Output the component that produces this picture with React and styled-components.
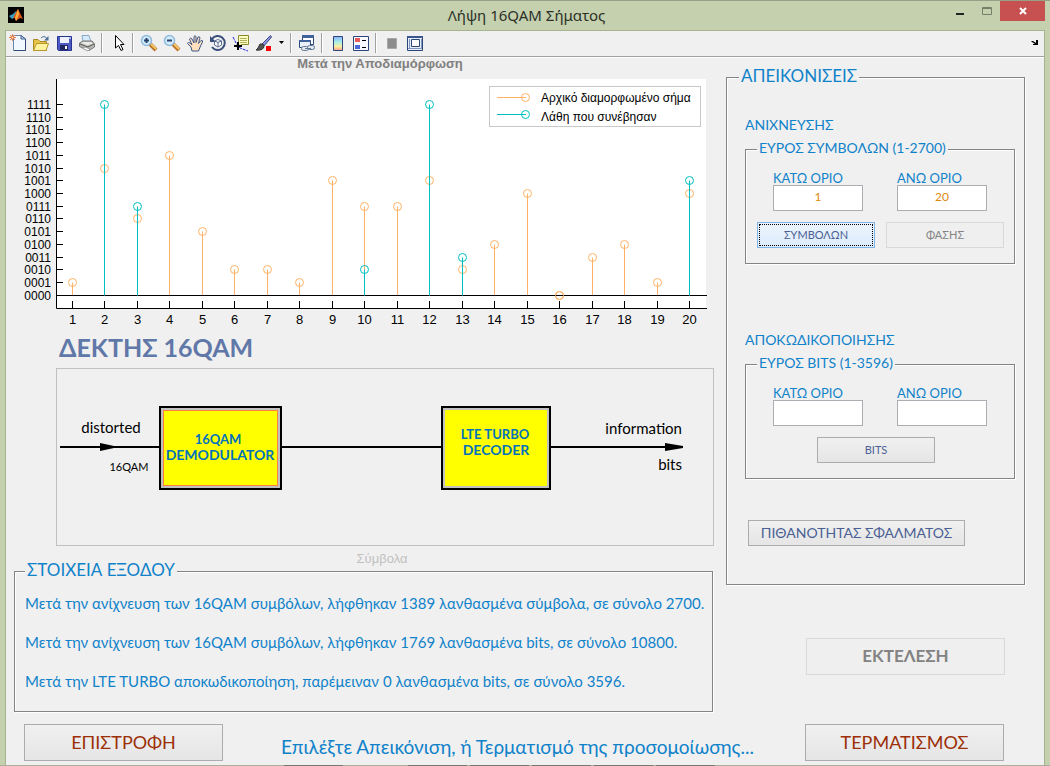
import React from "react";
import styled, { createGlobalStyle } from "styled-components";

const blue = "#0f82ca";
const orange = "#ffb266";
const teal = "#00bfbf";
const uiFont = `Lato, "Noto Sans", sans-serif`;
const plotFont = `"Liberation Sans", sans-serif`;

const originalSymbols = [
  1, 10, 6, 11, 5, 2, 2, 1, 9, 7, 7, 9, 2, 4, 8, 0, 3, 4, 1, 8
];
const symbolErrors = { 2: 15, 3: 7, 10: 2, 12: 15, 13: 3, 20: 9 };
const levels = Array.from({ length: 16 }, (_, i) => i);

const results = [
  "Μετά την ανίχνευση των 16QAM συμβόλων, λήφθηκαν 1389 λανθασμένα σύμβολα, σε σύνολο 2700.",
  "Μετά την ανίχνευση των 16QAM συμβόλων, λήφθηκαν 1769 λανθασμένα bits, σε σύνολο 10800.",
  "Μετά την LTE TURBO αποκωδικοποίηση, παρέμειναν 0 λανθασμένα bits, σε σύνολο 3596."
];

function symbolX(n) {
  return Math.floor(39.5 + n * 32.5) + 0.5;
}

function levelY(v) {
  return Math.round(294.8 - v * 12.72) + 0.5;
}

function Stem({ n, value, color }) {
  const x = symbolX(n);
  return (
    <g stroke={color} fill="none">
      <line x1={x} x2={x} y1={levelY(0)} y2={levelY(value)} />
      <circle cx={x} cy={levelY(value)} r="4" />
    </g>
  );
}

function StemPlot() {
  return (
    <Plot viewBox="14 75 700 254" role="img" aria-label="Μετά την Αποδιαμόρφωση">
      <rect x="56" y="79" width="650" height="229" fill="#fff" />
      {originalSymbols.map((value, i) => (
        <Stem key={i} n={i + 1} value={value} color={orange} />
      ))}
      <path d="M56.5 79V308.5H707M56 295.5H707" stroke="#000" fill="none" />
      <Stem n={16} value={0} color={orange} />
      {Object.keys(symbolErrors).map(n => (
        <Stem key={n} n={Number(n)} value={symbolErrors[n]} color={teal} />
      ))}
      {levels.map(v => (
        <g key={v}>
          <line x1="57" x2="63" y1={levelY(v)} y2={levelY(v)} stroke="#000" />
          <text x="51" y={levelY(v) + 4.5} fontSize="12" textAnchor="end">
            {v.toString(2).padStart(4, "0")}
          </text>
        </g>
      ))}
      {originalSymbols.map((_, i) => (
        <g key={i}>
          <line
            x1={symbolX(i + 1)}
            x2={symbolX(i + 1)}
            y1="301"
            y2="308"
            stroke="#000"
          />
          <text x={symbolX(i + 1)} y="324" fontSize="13" textAnchor="middle">
            {i + 1}
          </text>
        </g>
      ))}
      <rect x="489.5" y="86.5" width="211" height="40" fill="#fff" stroke="#c8c8c8" />
      <g stroke={orange} fill="none">
        <path d="M497 97.5H526" />
        <circle cx="525.5" cy="97.5" r="4" />
      </g>
      <g stroke={teal} fill="none">
        <path d="M497 114.5H526" />
        <circle cx="525.5" cy="114.5" r="4" />
      </g>
      <text x="541" y="102" fontSize="12">
        Αρχικό διαμορφωμένο σήμα
      </text>
      <text x="541" y="121" fontSize="12">
        Λάθη που συνέβησαν
      </text>
    </Plot>
  );
}

function ReceiverDiagram() {
  return (
    <Diagram viewBox="57 369 656 176" role="img" aria-label="Δέκτης 16QAM">
      <path d="M60 447H160M281 447H442M550 447H682" stroke="#000" strokeWidth="2" />
      <path d="M100 443L114 446V448L100 451ZM665 443L683 446V448L665 451Z" />
      <rect x="160" y="407" width="121" height="82" fill="#c0c0c0" stroke="#000" strokeWidth="2" />
      <rect x="163.5" y="410.5" width="114" height="75" fill="#ff0" stroke="#ff8040" />
      <rect x="442" y="407" width="108" height="82" fill="#c0c0c0" stroke="#000" strokeWidth="2" />
      <rect x="445" y="410" width="102" height="76" fill="#ff0" />
      <text x="111" y="433" fontSize="15" textAnchor="middle">distorted</text>
      <text x="129" y="471" fontSize="11" textAnchor="middle">16QAM</text>
      <text x="682" y="434" fontSize="15" textAnchor="end">information</text>
      <text x="682" y="470" fontSize="15" textAnchor="end">bits</text>
      <g fill="#0072bd" fontWeight="700" textAnchor="middle">
        <text x="218" y="444" fontSize="13">16QAM</text>
        <text x="220" y="460" fontSize="14">DEMODULATOR</text>
        <text x="495" y="439" fontSize="13">LTE TURBO</text>
        <text x="496" y="455" fontSize="14">DECODER</text>
      </g>
    </Diagram>
  );
}

function RangeFields({ id, low, high }) {
  return (
    <Fields>
      <Field htmlFor={`${id}-low`}>
        ΚΑΤΩ ΟΡΙΟ
        <Input id={`${id}-low`} type="text" defaultValue={low} />
      </Field>
      <Field htmlFor={`${id}-high`}>
        ΑΝΩ ΟΡΙΟ
        <Input id={`${id}-high`} type="text" defaultValue={high} />
      </Field>
    </Fields>
  );
}

const icons = {
  new: (
    <>
      <path d="M4.500 1.500H12L16.500 5V16.500H4.500Z" fill="#f2f8ff" stroke="#6a86b0" />
      <path d="M5 16.500H16.500V5" fill="none" stroke="#2f4a78" />
      <path d="M12 1.500V5H16.500Z" fill="#bfd3ee" stroke="#41608f" />
      <path d="M3.500 0V7M0 3.500H7M1 1L6 6M6 1L1 6" stroke="#e88a50" />
      <circle cx="3.500" cy="3.500" r="1.500" fill="#fff0a0" stroke="#d8553a" />
    </>
  ),
  open: (
    <>
      <path d="M1.500 16.500V5.500H6L8 7.500H14.500V16.500Z" fill="#e8c34c" stroke="#a88820" />
      <path d="M1.500 16.500L4.500 9.500H16.500L14 16.500Z" fill="#fff3a0" stroke="#b8962a" />
      <path d="M9 4Q12 1 15 4.500" fill="none" stroke="#4d6d94" />
      <path d="M16.500 2V6.500H12Z" fill="#4d6d94" />
    </>
  ),
  save: (
    <>
      <path d="M2.500 2.500H16.500V16.500H3.500L2.500 15.500Z" fill="#4c5bc8" stroke="#28348c" />
      <path d="M5 3H14V9H5Z" fill="#eef2ff" />
      <path d="M5 11H13V16H5Z" fill="#20265e" />
      <path d="M10 12H12V15H10Z" fill="#fff" />
      <path d="M14 3H16V5H14Z" fill="#a9b2f4" />
    </>
  ),
  print: (
    <>
      <path d="M5 8L4 1.500H11L13 8Z" fill="#d5eafa" stroke="#8aa9c8" />
      <path d="M1.500 9L5 7H14L16.500 10V13L11 16.500L1.500 12.500Z" fill="#b8b8b4" stroke="#777" />
      <path d="M3 9L9 11.500L15 9.500L13 8H5Z" fill="#e8e8e4" />
      <path d="M2 10L10 13L16 10" fill="none" stroke="#555" />
      <path d="M4 14L7 13L12 15L10 17Z" fill="#fff" stroke="#999" />
    </>
  ),
  pointer: (
    <path d="M6.500 1.500V14L9.500 11.500L12 16.500L14 15.500L11.500 10.500H15Z" fill="#fff" stroke="#000" />
  ),
  hand: (
    <path
      d="M6 17L5 13L1.500 9.500Q2 7.500 4 9L6 11L3.500 5Q4.500 3 6 5L8 9V2.500Q9 1 10 2.500V8.500L12 3Q13.500 2 14 4L12.500 9.500L15 6.500Q17 6 16.500 8L14.500 12L12.500 17Z"
      fill="#ffdfbd"
      stroke="#3d5785"
    />
  ),
  rotate: (
    <>
      <path d="M3 5A7 7 0 1 1 3 13" fill="none" stroke="#3a4f7c" strokeWidth="2" />
      <path d="M1 2V8H7Z" fill="#3a4f7c" />
      <path d="M9 5.500L12.500 7V11L9 13L5.500 11V7ZM5.500 7L9 8.500L12.500 7M9 8.500V13" fill="#fff" stroke="#5b6f94" />
    </>
  ),
  datatip: (
    <>
      <path d="M1 3L4 9L8 14L16 17" fill="none" stroke="#22d" strokeDasharray="3 1" />
      <path d="M6.500 1.500H16.500V10.500H10L7 12V10.500H6.500Z" fill="#ffffbe" stroke="#8a8a30" />
      <path d="M8 4.500H15M8 6.500H15M8 8.500H15" stroke="#b0b060" />
      <path d="M6 8V16M2 12H10" stroke="#000" strokeWidth="2" />
    </>
  ),
  brush: (
    <>
      <path d="M15.500 1.500L7 10L9 12L16.500 3Z" fill="#8e96df" stroke="#3c4486" />
      <path d="M8 10L5 10L3 14L1 16Q7 17 9 13Z" fill="#555" stroke="#333" />
      <path d="M11 12H16V17H11Z" fill="#f00" />
    </>
  ),
  link: (
    <>
      <path d="M4.500 1.500H15.500V10.500H4.500Z" fill="#fff" stroke="#2e4a7c" />
      <path d="M4 1H16V4H4Z" fill="#3f619c" />
      <path d="M1.500 6.500H12.500V13.500H1.500Z" fill="#e8f0fc" stroke="#2e4a7c" />
      <path d="M1 6H13V8H1Z" fill="#3f619c" />
      <rect x="3.500" y="12.500" width="7" height="4" rx="2" fill="#e4e8ee" stroke="#5f7894" />
      <rect x="9.500" y="11.500" width="7" height="4" rx="2" fill="#e4e8ee" stroke="#5f7894" />
      <path d="M7 14.500H13" stroke="#5f7894" />
    </>
  ),
  colorbar: (
    <>
      <defs>
        <linearGradient id="spectrum" x2="0" y2="1">
          <stop offset="0" stopColor="#8ab0ff" />
          <stop offset="0.4" stopColor="#a8f0e8" />
          <stop offset="0.7" stopColor="#fbf0a0" />
          <stop offset="1" stopColor="#ffa08c" />
        </linearGradient>
      </defs>
      <path d="M4.500 2.500H13.500V16.500H4.500Z" fill="url(#spectrum)" stroke="#2b477a" />
    </>
  ),
  legend: (
    <>
      <path d="M1.500 2.500H16.500V16.500H1.500Z" fill="#f7f9ff" stroke="#2b477a" />
      <path d="M3 4H8V8H3Z" fill="#e65c5c" />
      <path d="M3 11H8V15H3Z" fill="#4c68d8" />
      <path d="M10 6.500H14M10 13.500H14" stroke="#000" />
    </>
  ),
  hideTools: <path d="M4.500 4.500H13.500V14.500H4.500Z" fill="#8c8c8c" stroke="#a8a8a8" />,
  showTools: (
    <>
      <path d="M1.500 2.500H16.500V16.500H1.500Z" fill="#e8effc" stroke="#2b477a" />
      <path d="M1 2H17V4H1Z" fill="#3a568c" />
      <path d="M5.500 5.500H13.500V12.500H5.500Z" fill="#fff" stroke="#2b477a" />
      <path d="M2 14.500H16M3.500 5V14M15.500 5V14" stroke="#8195bb" />
    </>
  )
};

function Magnifier({ plus }) {
  return (
    <>
      <path d="M10 10L16 16" stroke="#b87224" strokeWidth="4" />
      <path d="M11 10L16 15" stroke="#f6c96c" strokeWidth="2" />
      <circle cx="6.500" cy="6.500" r="5" fill="#d2edfb" stroke="#92badc" strokeWidth="1.500" />
      <path d={plus ? "M4 6.500H9M6.500 4V9" : "M4 6.500H9"} stroke="#2a4270" strokeWidth="2" />
    </>
  );
}

function Tool({ label, icon, children }) {
  return (
    <ToolButton type="button" aria-label={label}>
      <svg width="18" height="18" viewBox="0 0 18 18">
        {icon ? icons[icon] : children}
      </svg>
    </ToolButton>
  );
}

export default function App() {
  return (
    <Window>
      <GlobalStyle />
      <TitleBar>
        <Logo width="16" height="16" viewBox="0 0 16 16" aria-hidden="true">
          <path d="M0 0H16V16H0Z" />
          <path d="M1 9L5 7L8 4L9 6L6 11L4 12Z" fill="#3b9ec4" />
          <path d="M5 11L8 5L10 2L12 6L15 12L12 11L8 14L7 11Z" fill="#d9561c" />
          <path d="M10 2L11 7L9 12L8 14L7 11Z" fill="#ffb03c" />
        </Logo>
        <WindowTitle>Λήψη 16QAM Σήματος</WindowTitle>
        <WindowButtons>
          <WindowButton type="button" aria-label="Ελαχιστοποίηση">
            <svg width="12" height="12"><path d="M2 8H10V10H2Z" fill="#222" /></svg>
          </WindowButton>
          <WindowButton type="button" aria-label="Μεγιστοποίηση">
            <svg width="12" height="12"><path d="M1.500 2.500H10.500V9.500H1.500ZM1 3.500H11" fill="none" stroke="#75806b" /></svg>
          </WindowButton>
          <WindowButton type="button" aria-label="Κλείσιμο" $close>
            <svg width="12" height="12"><path d="M3 3L9 9M9 3L3 9" stroke="#fff" strokeWidth="2" /></svg>
          </WindowButton>
        </WindowButtons>
      </TitleBar>

      <Client>
        <Toolbar>
          <Tool label="Νέο" icon="new" />
          <Tool label="Άνοιγμα" icon="open" />
          <Tool label="Αποθήκευση" icon="save" />
          <Tool label="Εκτύπωση" icon="print" />
          <Separator />
          <Tool label="Επιλογή" icon="pointer" />
          <Separator />
          <Tool label="Μεγέθυνση">
            <Magnifier plus />
          </Tool>
          <Tool label="Σμίκρυνση">
            <Magnifier />
          </Tool>
          <Tool label="Μετακίνηση" icon="hand" />
          <Tool label="Περιστροφή" icon="rotate" />
          <Tool label="Δείκτης δεδομένων" icon="datatip" />
          <Tool label="Πινέλο" icon="brush" />
          <CaretButton type="button" aria-label="Χρώμα πινέλου">
            <svg width="5" height="3"><path d="M0 0H5L2.500 3Z" /></svg>
          </CaretButton>
          <Separator />
          <Tool label="Σύνδεση" icon="link" />
          <Separator />
          <Tool label="Χρωματική κλίμακα" icon="colorbar" />
          <Tool label="Υπόμνημα" icon="legend" />
          <Separator />
          <Tool label="Απόκρυψη εργαλείων" icon="hideTools" />
          <Tool label="Εμφάνιση εργαλείων" icon="showTools" />
          <DockButton type="button" aria-label="Αγκύρωση">
            <svg width="8" height="6"><path d="M0 1H2L5 3V0H7V5H2V4H4L1 2Z" /></svg>
          </DockButton>
        </Toolbar>

        <Columns>
          <Main>
            <PlotTitle>Μετά την Αποδιαμόρφωση</PlotTitle>
            <StemPlot />
            <Heading>ΔΕΚΤΗΣ 16QAM</Heading>
            <DiagramPanel>
              <ReceiverDiagram />
            </DiagramPanel>
            <AxisLabel>Σύμβολα</AxisLabel>
            <Results>
              <Legend $large>ΣΤΟΙΧΕΙΑ ΕΞΟΔΟΥ</Legend>
              {results.map(line => (
                <ResultLine key={line}>{line}</ResultLine>
              ))}
            </Results>
          </Main>

          <Side>
            <ViewsPanel>
              <Legend $large>ΑΠΕΙΚΟΝΙΣΕΙΣ</Legend>
              <GroupTitle>ΑΝΙΧΝΕΥΣΗΣ</GroupTitle>
              <Group>
                <Legend>ΕΥΡΟΣ ΣΥΜΒΟΛΩΝ (1-2700)</Legend>
                <RangeFields id="symbols" low="1" high="20" />
                <ButtonRow>
                  <Button type="button" $active>ΣΥΜΒΟΛΩΝ</Button>
                  <Button type="button" disabled>ΦΑΣΗΣ</Button>
                </ButtonRow>
              </Group>
              <GroupTitle $spaced>ΑΠΟΚΩΔΙΚΟΠΟΙΗΣΗΣ</GroupTitle>
              <Group>
                <Legend>ΕΥΡΟΣ BITS (1-3596)</Legend>
                <RangeFields id="bits" low="" high="" />
                <ButtonRow $indent>
                  <Button type="button">BITS</Button>
                </ButtonRow>
              </Group>
              <WideButton type="button">ΠΙΘΑΝΟΤΗΤΑΣ ΣΦΑΛΜΑΤΟΣ</WideButton>
            </ViewsPanel>
            <RunButton type="button" disabled>ΕΚΤΕΛΕΣΗ</RunButton>
          </Side>
        </Columns>

        <Footer>
          <ActionButton type="button">ΕΠΙΣΤΡΟΦΗ</ActionButton>
          <Status>Επιλέξτε Απεικόνιση, ή Τερματισμό της προσομοίωσης...</Status>
          <ActionButton type="button">ΤΕΡΜΑΤΙΣΜΟΣ</ActionButton>
        </Footer>
      </Client>
      <WindowEdge>
        <EdgeTab $current />
        <EdgeTab />
        <EdgeTab />
        <EdgeTab />
        <EdgeTab />
        <EdgeTab />
      </WindowEdge>
    </Window>
  );
}

const GlobalStyle = createGlobalStyle`
  * {
    box-sizing: border-box;
  }
  body {
    margin: 0;
    background: #c4d0ae;
    font-family: ${uiFont};
  }
  h1, h2, p {
    margin: 0;
  }
  button, input {
    font-family: inherit;
  }
`;

const Window = styled.div`
  display: flex;
  flex-direction: column;
  min-height: 100vh;
  border-top: 1px solid #979f86;
  background: #c4d0ae;
`;

const TitleBar = styled.header`
  display: grid;
  grid-template-columns: 1fr auto 1fr;
  height: 29px;
  padding: 0 5px 0 8px;
`;

const Logo = styled.svg`
  margin-top: 6px;
`;

const WindowTitle = styled.h1`
  font: 400 15px/28px "Noto Sans", sans-serif;
  color: #2d3128;
`;

const WindowButtons = styled.div`
  display: flex;
  justify-content: flex-end;
  align-items: flex-start;
`;

const WindowButton = styled.button`
  display: grid;
  place-items: center;
  width: ${props => (props.$close ? "45px" : "27px")};
  height: 20px;
  padding: 0;
  border: none;
  background: ${props => (props.$close ? "#c75050" : "transparent")};
`;

const Client = styled.div`
  flex: 1;
  margin: 0 5px;
  border: 1px solid #a6b38c;
  border-bottom: none;
  background: #f0f0f0;
`;

const Toolbar = styled.div`
  display: flex;
  align-items: center;
  height: 27px;
  padding-bottom: 3px;
  border-bottom: 1px solid #fff;
  box-shadow: inset 0 -1px 0 #a0a0a0;
`;

const ToolButton = styled.button`
  display: grid;
  place-items: center;
  width: 23px;
  height: 22px;
  padding: 0;
  border: none;
  background: none;
`;

const CaretButton = styled(ToolButton)`
  width: 12px;
`;

const DockButton = styled(ToolButton)`
  margin-left: auto;
  width: 18px;
`;

const Separator = styled.div`
  width: 2px;
  height: 20px;
  margin: 0 3px;
  border-left: 1px solid #a0a0a0;
  border-right: 1px solid #fff;
`;

const Columns = styled.div`
  display: grid;
  grid-template-columns: minmax(0, 7fr) minmax(0, 3fr);
  gap: 12px;
  padding: 0 18px 0 8px;
`;

const Main = styled.main`
  display: flex;
  flex-direction: column;
`;

const PlotTitle = styled.h2`
  height: 17px;
  padding-left: 32px;
  font: 700 13px/12px ${plotFont};
  color: #808080;
  text-align: center;
`;

const Plot = styled.svg`
  display: block;
  width: 100%;
  font-family: ${plotFont};
`;

const Heading = styled.h2`
  margin: 2px 0 4px 45px;
  font-size: 25px;
  line-height: 33px;
  color: #5f78a8;
`;

const DiagramPanel = styled.div`
  margin-left: 42px;
  border: 1px solid #c0c0c0;
`;

const Diagram = styled.svg`
  display: block;
  width: 100%;
  font-family: ${uiFont};
`;

const AxisLabel = styled.p`
  height: 15px;
  padding: 5px 0 0 36px;
  font: 13px/16px ${plotFont};
  color: #c0c0c0;
  text-align: center;
`;

/* grey line with a white highlight below and to the right of it */
const Panel = styled.fieldset`
  min-width: 0;
  margin: 0 1px 1px 0;
  border: 1px solid #848484;
  box-shadow: 1px 1px 0 #fff, inset 1px 1px 0 #fff;
`;

const Legend = styled.legend`
  padding: 0 2px 2px;
  background: #f0f0f0;
  font-size: ${props => (props.$large ? "17px" : "14px")};
  line-height: 18px;
  color: ${blue};
`;

const Results = styled(Panel)`
  padding: 10px 6px 18px 10px;
`;

const ResultLine = styled.p`
  font-size: 15px;
  line-height: 24px;
  color: ${blue};
  white-space: nowrap;

  & + & {
    margin-top: 15px;
  }
`;

const Side = styled.aside`
  display: flex;
  flex-direction: column;
  padding-top: 9px;
`;

const ViewsPanel = styled(Panel)`
  padding: 28px 8px 38px 18px;

  & > legend {
    margin-left: -6px;
  }
`;

const GroupTitle = styled.p`
  margin-top: ${props => (props.$spaced ? "66px" : "0")};
  margin-bottom: 4px;
  font-size: 14px;
  line-height: 20px;
  color: ${blue};
`;

const Group = styled(Panel)`
  padding: 12px 10px 15px 11px;
`;

const Fields = styled.div`
  display: grid;
  grid-template-columns: 1fr 1fr;
  gap: 34px;
  padding: 0 17px 0 16px;
`;

const Field = styled.label`
  font-size: 13px;
  line-height: 14px;
  color: ${blue};
  white-space: nowrap;
`;

const Input = styled.input`
  display: block;
  width: 100%;
  height: 26px;
  padding: 0 0 3px;
  border: 1px solid #abadb3;
  background: #fff;
  font-size: 12px;
  color: #e0880f;
  text-align: center;
`;

const ButtonRow = styled.div`
  display: flex;
  gap: 11px;
  margin-top: 11px;
  padding-left: ${props => (props.$indent ? "60px" : "0")};
`;

const Button = styled.button`
  width: 118px;
  height: 26px;
  padding: 0 0 2px;
  border: 1px solid ${props => (props.$active ? "#7eb4ea" : "#acacac")};
  background: ${props =>
    props.$active
      ? "linear-gradient(#ecf4fc, #dcecfc)"
      : "linear-gradient(#f0f0f0, #e5e5e5)"};
  outline: ${props => (props.$active ? "1px dotted #000" : "none")};
  outline-offset: -3px;
  font-size: 11px;
  color: #4a5f94;

  &:disabled {
    border-color: #d9d9d9;
    background: #efefef;
    color: #838383;
  }
`;

const WideButton = styled(Button)`
  width: 217px;
  margin: 40px 0 0 3px;
  font-size: 14px;
`;

const ActionButton = styled(Button)`
  width: 199px;
  height: 37px;
  font-size: 18px;
  color: #9c2f06;
`;

const RunButton = styled(ActionButton)`
  align-self: flex-end;
  margin: 52px 21px 0 0;
  font-size: 17px;
  font-weight: 700;
`;

const Footer = styled.footer`
  display: flex;
  padding: 11px 40px 4px 18px;
`;

const Status = styled.p`
  flex: 1;
  padding: 8px 0 0 58px;
  font-size: 19px;
  line-height: 29px;
  color: ${blue};
  white-space: nowrap;
`;

const WindowEdge = styled.div`
  display: flex;
  gap: 3px;
  height: 2px;
  padding-left: 284px;
  background: #abae98;
`;

const EdgeTab = styled.div`
  width: 59px;
  margin-right: ${props => (props.$current ? "62px" : "0")};
  border: 1px solid #77786c;
  border-bottom: none;
  background: ${props => (props.$current ? "#fff" : "#d8d8cc")};
`;
